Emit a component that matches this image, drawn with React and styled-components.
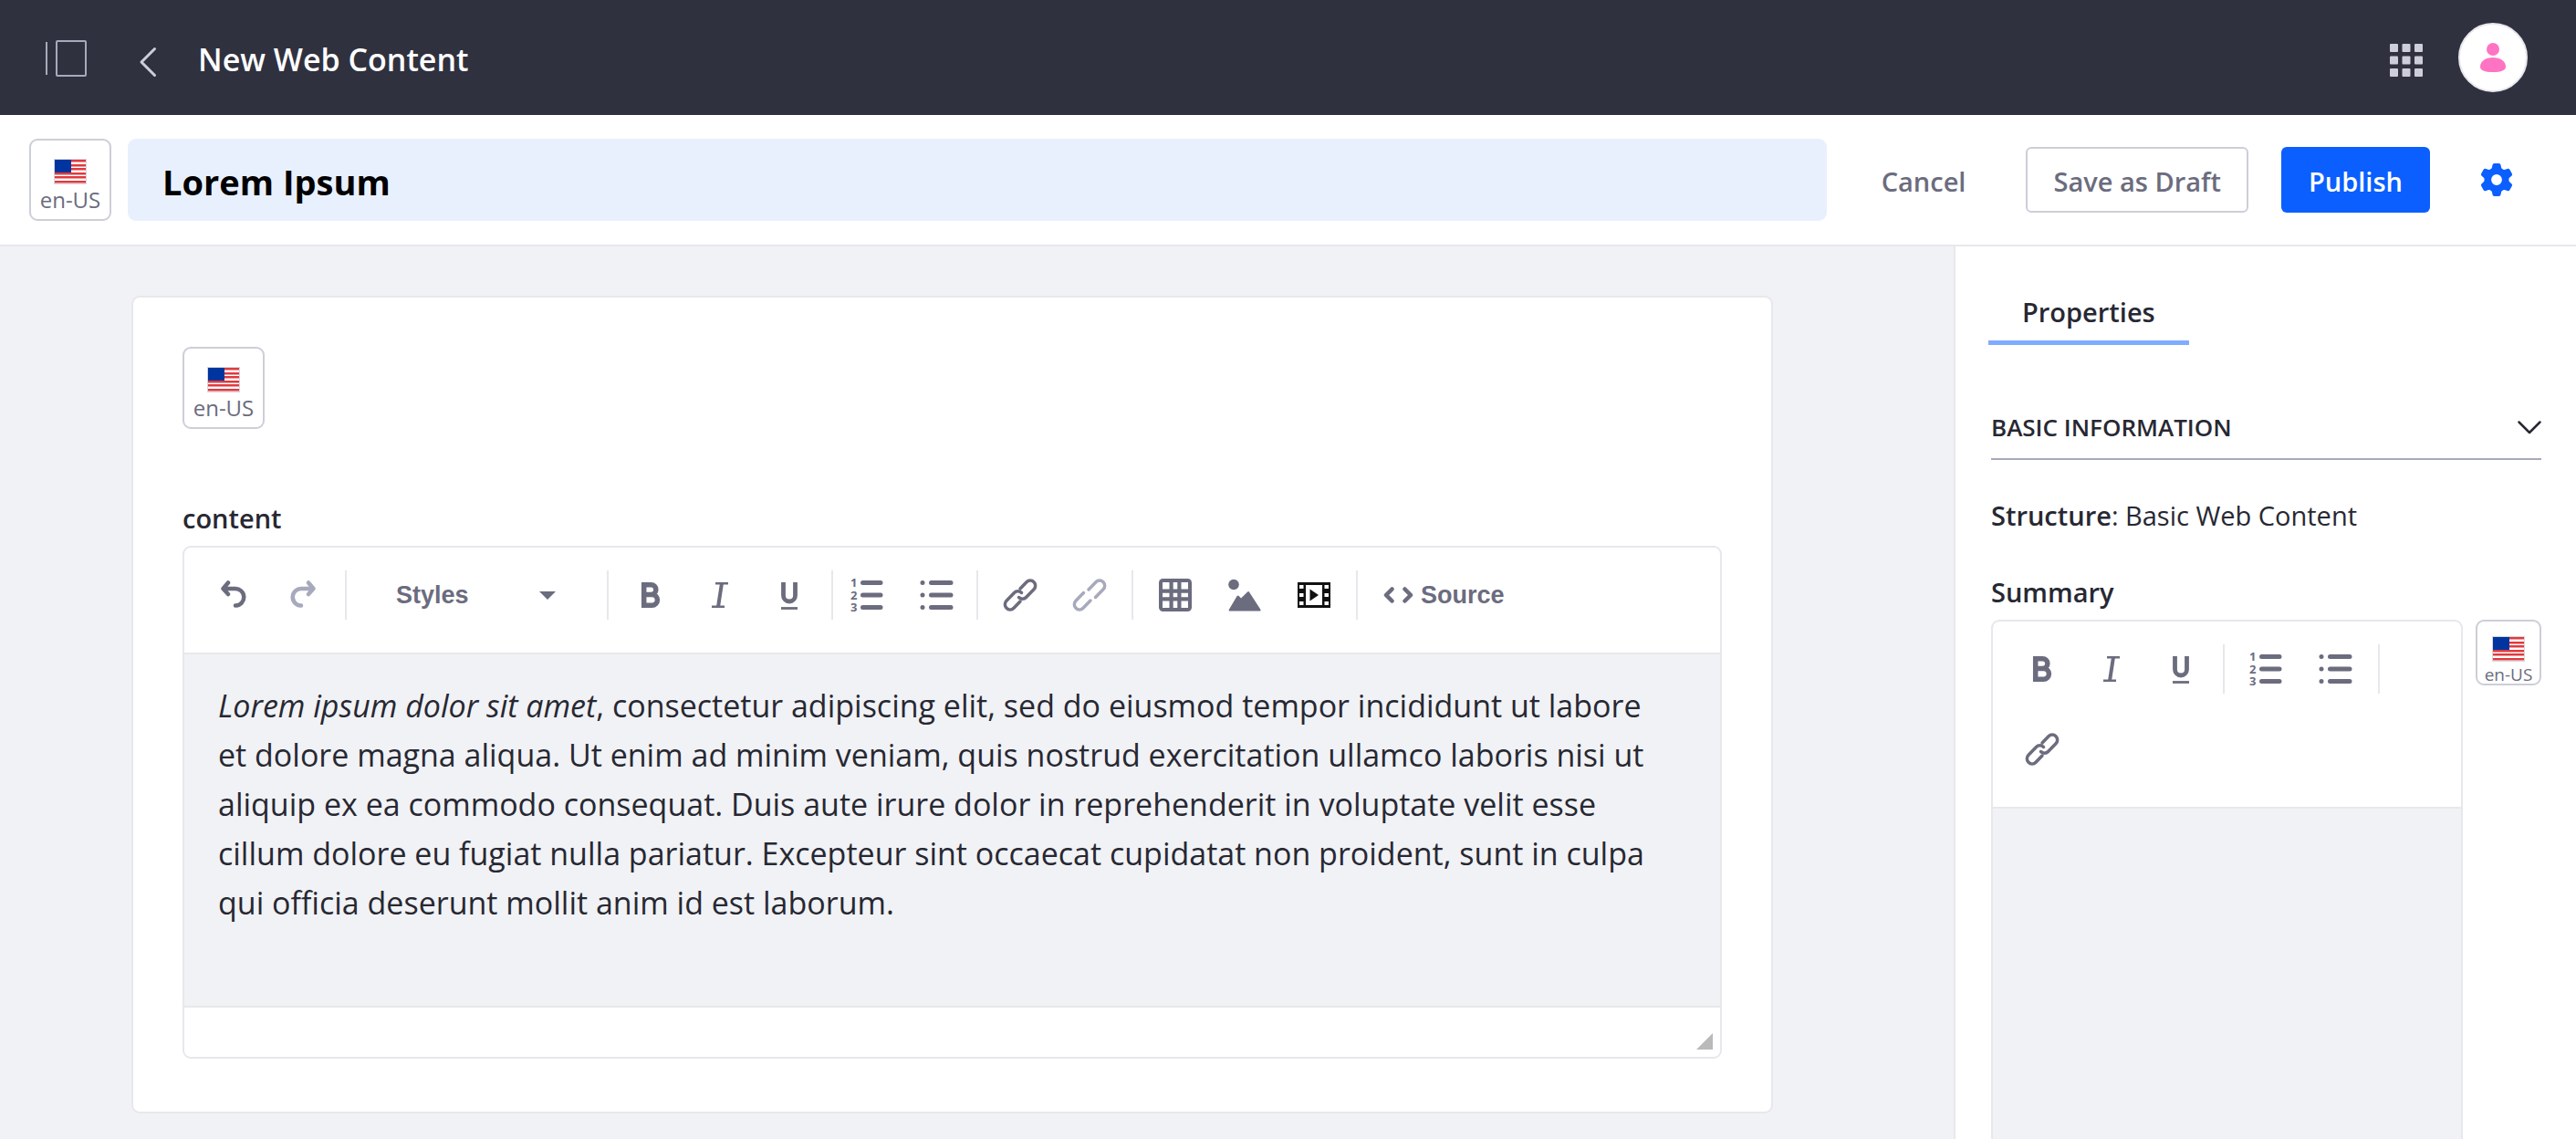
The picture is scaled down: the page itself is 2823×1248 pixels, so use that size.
import React from "react";
import styled, { createGlobalStyle, css } from "styled-components";

const ui = '"Open Sans", "Noto Sans", sans-serif';
const editorUi = '"Liberation Sans", Arial, sans-serif';

const color = {
  dark: "#30313f",
  text: "#272833",
  muted: "#6b6c7e",
  disabled: "#a7a9bc",
  outline: "#cdced9",
  line: "#e7e7ed",
  surface: "#f1f2f5",
  primary: "#0b5fff",
  field: "#e8f0fe",
};

const GlobalStyle = createGlobalStyle`
  * { box-sizing: border-box; }
  body { margin: 0; background: ${color.surface}; color: ${color.text}; font-family: ${ui}; }
  button, input, select { font: inherit; color: inherit; margin: 0; }
  button { padding: 0; border: 0; background: none; cursor: pointer; }
  svg { display: block; flex: none; overflow: visible; }
`;

const Shell = styled.div`
  display: flex;
  flex-direction: column;
  height: 100vh;
  overflow: hidden;
`;

const ControlMenu = styled.header`
  display: flex;
  flex: none;
  align-items: center;
  height: 126px;
  padding: 0 53px 0 50px;
  background: ${color.dark};
  color: #fff;
`;

const MenuButton = styled.button`
  display: flex;
  align-items: center;
  padding-top: ${(p) => (p.$soft ? 2 : 6)}px;
  color: ${(p) => (p.$soft ? color.disabled : color.outline)};
`;

const BackLink = styled.a`
  display: flex;
  margin: 10px 46px 0 58px;
  color: ${color.outline};
`;

const PageTitle = styled.h1`
  flex: 1;
  margin: 0;
  padding-top: 4px;
  font-size: 34px;
  line-height: 50px;
  font-weight: 600;
`;

const MenuActions = styled.div`
  display: flex;
  align-items: center;
  gap: 39px;
`;

const Avatar = styled.button`
  display: grid;
  place-items: center;
  width: 76px;
  height: 76px;
  border: 2px solid ${color.line};
  border-radius: 50%;
  background: #fff;
  color: #ff73c3;
`;

const TitleBar = styled.form`
  display: flex;
  flex: none;
  align-items: center;
  height: 144px;
  padding: 0 68px 0 32px;
  border-bottom: 2px solid ${color.line};
  background: #fff;
`;

const TitleInput = styled.input`
  flex: 1;
  min-width: 0;
  height: 90px;
  margin-left: 18px;
  padding: 4px 38px 0;
  border: 0;
  border-radius: 9px;
  background: ${color.field};
  color: #000;
  font-size: 38px;
  font-weight: 700;
`;

const LocaleButton = styled.button`
  display: flex;
  flex: none;
  flex-direction: column;
  align-items: center;
  width: ${(p) => (p.$small ? 72 : 90)}px;
  height: ${(p) => (p.$small ? 72 : 90)}px;
  padding-top: ${(p) => (p.$small ? 16 : 20)}px;
  border: 2px solid ${color.outline};
  border-radius: 9px;
  background: #fff;
  color: ${color.muted};
  font-size: ${(p) => (p.$small ? 19 : 24)}px;
  line-height: ${(p) => (p.$small ? 28 : 34)}px;
`;

const Actions = styled.div`
  display: flex;
  align-items: center;
  gap: 36px;
  margin-left: 30px;
`;

const Button = styled.button`
  height: 72px;
  padding: 2px 28px 0;
  border: 2px solid transparent;
  border-radius: 6px;
  color: ${color.muted};
  font-size: 29px;
  font-weight: 600;
  ${(p) => p.$kind === "secondary" && css`border-color: ${color.outline}; background: #fff;`}
  ${(p) => p.$kind === "primary" && css`background: ${color.primary}; color: #fff;`}
`;

const SettingsButton = styled.button`
  margin-left: 18px;
  color: ${color.primary};
`;

const Body = styled.div`
  display: flex;
  flex: 1;
  min-height: 0;
`;

const Main = styled.main`
  flex: 1;
  min-width: 0;
  padding: 54px 198px 30px 144px;
`;

const Card = styled.section`
  padding: 54px 54px 58px;
  border: 2px solid ${color.line};
  border-radius: 9px;
  background: #fff;
`;

const FieldLabel = styled.h2`
  margin: ${(p) => p.$top}px 0 8px;
  font-size: 29px;
  line-height: 44px;
  font-weight: 600;
`;

const Editor = styled.div`
  flex: 1;
  min-width: 0;
  border: 2px solid ${color.line};
  border-radius: 9px;
  background: #fff;
`;

const Toolbar = styled.div`
  display: flex;
  flex-wrap: wrap;
  row-gap: 34px;
  padding: 25px 16px 36px;
  border-bottom: 2px solid #e8e8e8;
`;

const Group = styled.div`
  display: flex;
  align-items: center;
  height: 54px;
  padding: 0 8px 0 ${(p) => (p.$first ? 0 : 8)}px;
  border-right: ${(p) => (p.$last ? 0 : 2)}px solid ${color.line};
  ${(p) => p.$tight && css`padding: 0 5px 0 0;`}
`;

const Tool = styled.button`
  display: grid;
  place-items: center;
  width: 76px;
  height: 54px;
  color: ${(p) => (p.disabled ? color.disabled : color.muted)};
`;

const StylesBox = styled.label`
  display: grid;
  align-items: center;
  width: 269px;
  color: ${color.muted};
  > * { grid-area: 1 / 1; }
  svg { justify-self: end; margin-right: 48px; pointer-events: none; }
`;

const StylesSelect = styled.select`
  width: 100%;
  height: 54px;
  padding: 0 0 0 46px;
  border: 0;
  appearance: none;
  background: transparent;
  font-family: ${editorUi};
  font-size: 27px;
  font-weight: 700;
`;

const SourceButton = styled.button`
  display: flex;
  align-items: center;
  gap: 8px;
  margin-left: 20px;
  color: ${color.muted};
  font-family: ${editorUi};
  font-size: 27px;
  font-weight: 700;
`;

const Content = styled.div`
  min-height: ${(p) => p.$height}px;
  padding: 29px 54px 29px 37px;
  border-bottom: 2px solid #e8e8e8;
  background: ${color.surface};
  font-size: 34px;
  line-height: 54px;
  p { margin: 0; }
`;

const EditorFooter = styled.div`
  display: flex;
  align-items: flex-end;
  justify-content: flex-end;
  height: 54px;
  padding: 8px;
  color: #bababa;
`;

const Sidebar = styled.aside`
  flex: none;
  width: 682px;
  padding: 36px 38px 0 36px;
  border-left: 2px solid ${color.line};
  background: #fff;
`;

const Tab = styled.button`
  display: block;
  height: 72px;
  padding: 4px 37px 0;
  border-bottom: 5px solid #80acff;
  color: ${color.text};
  font-size: 29px;
  font-weight: 600;
`;

const SidebarBody = styled.div`
  padding-left: 3px;
`;

const PanelHeader = styled.button`
  display: flex;
  align-items: center;
  justify-content: space-between;
  width: 100%;
  height: 72px;
  margin-top: 54px;
  padding-top: 2px;
  border-bottom: 2px solid ${color.disabled};
  color: ${color.text};
  font-size: 26px;
  font-weight: 600;
`;

const Structure = styled.p`
  margin: 39px 0 0;
  font-size: 29px;
  line-height: 44px;
  b { font-weight: 600; }
`;

const SummaryRow = styled.div`
  display: flex;
  align-items: flex-start;
  gap: 14px;
`;

const Flag = () => (
  <svg width="36" height="28" viewBox="0 0 36 28">
    <rect width="36" height="28" fill="#d5d7de" />
    <rect x="1" y="1" width="34" height="26" fill="#fff" />
    {[1, 6, 10, 15, 19, 24].map((y) => (
      <rect key={y} x="1" y={y} width="34" height="2.5" fill="#e03a3e" />
    ))}
    <rect x="1" y="1" width="18" height="14" fill="#0035a0" />
  </svg>
);

const Locale = ({ small }) => (
  <LocaleButton type="button" $small={small}>
    <Flag />
    en-US
  </LocaleButton>
);

const Stroke = ({ children, w = 3.5, size = 36 }) => (
  <svg width={size} height={size} viewBox="0 0 36 36" fill="none" stroke="currentColor" strokeWidth={w} strokeLinecap="round" strokeLinejoin="round">
    {children}
  </svg>
);

const UndoIcon = () => (
  <Stroke w={4.5}><path d="M12 4.500L6.500 11l5.500 6M7.500 11h12a9 9 0 0 1 1 18.500h-.5" /></Stroke>
);
const RedoIcon = () => (
  <Stroke w={4.5}><path d="M24 4.500l5.500 6.500-5.500 6M28.500 11h-12a9 9 0 0 0-1 18.500h.5" /></Stroke>
);
const BoldIcon = () => (
  <svg width="36" height="36" viewBox="0 0 36 36" fill="none" stroke="currentColor" strokeWidth="5.500">
    <path d="M10.700 6.700h7.800a5.100 5.100 0 0 1 0 10.700h-7.800zM10.700 17.400h8.800a5.700 5.700 0 0 1 0 11.800h-8.800z" />
  </svg>
);
const ItalicIcon = () => (
  <svg width="36" height="36" viewBox="0 0 36 36" fill="none" stroke="currentColor">
    <path d="M13 5.300h14M9 30.700h14" strokeWidth="2.600" />
    <path d="M20 5l-4 26" strokeWidth="4" />
  </svg>
);
const UnderlineIcon = () => (
  <svg width="36" height="36" viewBox="0 0 36 36" fill="none" stroke="currentColor">
    <path d="M11.500 4v14.500a6.500 6.500 0 0 0 13 0V4" strokeWidth="4.800" />
    <path d="M9 32.500h18" strokeWidth="2.800" />
  </svg>
);
const Numeral = styled.text`
  font-family: "Open Sans", sans-serif;
  font-size: 13px;
  font-weight: 700;
  fill: currentColor;
  stroke: none;
`;
const NumberedIcon = () => (
  <Stroke w={5}>
    <path d="M12.500 4.500h19.500M12.500 18h19.500M12.500 31.500h19.500" />
    <Numeral x="-1" y="9">1</Numeral>
    <Numeral x="-1" y="23">2</Numeral>
    <Numeral x="-1" y="36">3</Numeral>
  </Stroke>
);
const BulletIcon = () => (
  <Stroke w={5}>
    <path d="M11.500 4.500h21.500M11.500 18h21.500M11.500 31.500h21.500M2 4.500h.01M2 18h.01M2 31.500h.01" />
  </Stroke>
);
const LinkIcon = () => (
  <Stroke>
    <path d="M18 11l7-7.300a5.600 5.600 0 0 1 8 8L24.500 20.500a5.600 5.600 0 0 1-8 0" />
    <path d="M18 25l-7 7.300a5.600 5.600 0 0 1-8-8L11.500 15.500a5.600 5.600 0 0 1 8 0" />
  </Stroke>
);
const UnlinkIcon = () => (
  <Stroke>
    <path d="M17 12l8-8.300a5.600 5.600 0 0 1 8 8L24.500 20.500" />
    <path d="M19 24l-8 8.300a5.600 5.600 0 0 1-8-8L11.500 15.500" />
  </Stroke>
);
const TableIcon = () => (
  <svg width="36" height="36" viewBox="0 0 36 36" fill="currentColor">
    <rect width="36" height="36" rx="4.500" />
    <path fill="#fff" d="M4 4h7.500v7.500H4zM15.700 4h4.600v7.500h-4.600zM24.500 4H32v7.500h-7.500zM4 15.700h7.500v4.600H4zM15.700 15.700h4.600v4.600h-4.600zM24.500 15.700H32v4.600h-7.500zM4 24.500h7.500V32H4zM15.700 24.500h4.600V32h-4.600zM24.500 24.500H32V32h-7.500z" />
  </svg>
);
const ImageIcon = () => (
  <svg width="36" height="36" viewBox="0 0 36 36" fill="currentColor">
    <circle cx="6" cy="6.500" r="5.800" />
    <path d="M.8 34L9.500 19.200q1-1.500 2.200-.2l2.300 2.500 7.200-7q1.100-1 2 .5L35.500 34q.5 1.500-1 1.500H1.500q-1.500 0-.7-1.500z" />
  </svg>
);
const VideoIcon = () => (
  <svg width="36" height="36" viewBox="0 0 36 36">
    <rect y="4" width="36" height="28" fill="#111" />
    <rect x="9" y="7" width="18" height="22" fill="#fff" />
    <path fill="#fff" d="M2 7h4.500v4H2zM2 16h4.500v4H2zM2 25h4.500v4H2zM29.500 7H34v4h-4.500zM29.500 16H34v4h-4.500zM29.500 25H34v4h-4.500z" />
    <path d="M13.500 11.500v13l9.500-6.500z" fill="#111" />
  </svg>
);
const CodeIcon = () => (
  <svg width="33" height="18" viewBox="0 0 33 18" fill="none" stroke="currentColor" strokeWidth="4.500" strokeLinecap="round" strokeLinejoin="round">
    <path d="M9.500 2.500L3 9l6.500 6.500M23.500 2.500L30 9l-6.500 6.500" />
  </svg>
);
const Gear = () => (
  <svg width="38" height="38" viewBox="0 0 38 38" fill="currentColor">
    <circle cx="19" cy="19" r="9.700" fill="none" stroke="currentColor" strokeWidth="7.600" />
    {[0, 60, 120, 180, 240, 300].map((a) => (
      <path key={a} transform={`rotate(${a} 19 19)`} d="M12.500 9Q14 6.500 14.500 2.800Q14.800 1 16.500 1H21.500Q23.200 1 23.500 2.800Q24 6.500 25.500 9z" />
    ))}
  </svg>
);

const TextTools = ({ first }) => (
  <Group $first={first}>
    <Tool type="button" aria-label="Bold"><BoldIcon /></Tool>
    <Tool type="button" aria-label="Italic"><ItalicIcon /></Tool>
    <Tool type="button" aria-label="Underline"><UnderlineIcon /></Tool>
  </Group>
);
const ListTools = ({ tight }) => (
  <Group $tight={tight}>
    <Tool type="button" aria-label="Numbered list"><NumberedIcon /></Tool>
    <Tool type="button" aria-label="Bulleted list"><BulletIcon /></Tool>
  </Group>
);

export default function App() {
  return (
    <Shell>
      <GlobalStyle />
      <ControlMenu>
        <MenuButton type="button" $soft aria-label="Product menu">
          <svg width="45" height="40" viewBox="0 0 45 40" fill="none" stroke="currentColor" strokeWidth="2">
            <path d="M1 2v36" />
            <rect x="12" y="1" width="32" height="38" rx="1" />
          </svg>
        </MenuButton>
        <BackLink href="#" aria-label="Back">
          <svg width="18" height="32" viewBox="0 0 18 32" fill="none" stroke="currentColor" strokeWidth="3" strokeLinecap="round" strokeLinejoin="round">
            <path d="M16.500 1.500L2 16l14.500 14.500" />
          </svg>
        </BackLink>
        <PageTitle>New Web Content</PageTitle>
        <MenuActions>
          <MenuButton type="button" aria-label="Applications">
            <svg width="36" height="36" viewBox="0 0 36 36" fill="currentColor">
              {[0, 13.5, 27].map((y) => [0, 13.5, 27].map((x) => (
                <rect key={`${x}-${y}`} x={x} y={y} width="9" height="9" rx="1" />
              )))}
            </svg>
          </MenuButton>
          <Avatar type="button" aria-label="User">
            <svg width="28" height="32" viewBox="0 0 28 32" fill="currentColor">
              <circle cx="14" cy="7" r="7" />
              <path d="M14 16c8 0 14 4 14 10 0 4-5 6-14 6S0 30 0 26c0-6 6-10 14-10z" />
            </svg>
          </Avatar>
        </MenuActions>
      </ControlMenu>

      <TitleBar onSubmit={(e) => e.preventDefault()}>
        <Locale />
        <TitleInput type="text" aria-label="Title" defaultValue="Lorem Ipsum" />
        <Actions>
          <Button type="button">Cancel</Button>
          <Button type="button" $kind="secondary">Save as Draft</Button>
          <Button type="submit" $kind="primary">Publish</Button>
          <SettingsButton type="button" aria-label="Settings"><Gear /></SettingsButton>
        </Actions>
      </TitleBar>

      <Body>
        <Main>
          <Card>
            <Locale />
            <FieldLabel $top={76}>content</FieldLabel>
            <Editor>
              <Toolbar role="toolbar">
                <Group $first>
                  <Tool type="button" aria-label="Undo"><UndoIcon /></Tool>
                  <Tool type="button" aria-label="Redo" disabled><RedoIcon /></Tool>
                </Group>
                <Group>
                  <StylesBox>
                    <StylesSelect aria-label="Styles" defaultValue="Styles">
                      <option>Styles</option>
                    </StylesSelect>
                    <svg width="18" height="9" viewBox="0 0 18 9" fill="currentColor"><path d="M0 0h18L9 9z" /></svg>
                  </StylesBox>
                </Group>
                <TextTools />
                <ListTools tight />
                <Group>
                  <Tool type="button" aria-label="Link"><LinkIcon /></Tool>
                  <Tool type="button" aria-label="Unlink" disabled><UnlinkIcon /></Tool>
                </Group>
                <Group>
                  <Tool type="button" aria-label="Table"><TableIcon /></Tool>
                  <Tool type="button" aria-label="Image"><ImageIcon /></Tool>
                  <Tool type="button" aria-label="Video"><VideoIcon /></Tool>
                </Group>
                <Group $last>
                  <SourceButton type="button"><CodeIcon />Source</SourceButton>
                </Group>
              </Toolbar>
              <Content $height={387}>
                <p>
                  <em>Lorem ipsum dolor sit amet</em>, consectetur adipiscing elit, sed do eiusmod tempor incididunt ut labore et dolore magna aliqua. Ut enim ad minim veniam, quis nostrud exercitation ullamco laboris nisi ut aliquip ex ea commodo consequat. Duis aute irure dolor in reprehenderit in voluptate velit esse cillum dolore eu fugiat nulla pariatur. Excepteur sint occaecat cupidatat non proident, sunt in culpa qui officia deserunt mollit anim id est laborum.
                </p>
              </Content>
              <EditorFooter>
                <svg width="18" height="18" viewBox="0 0 18 18" fill="currentColor"><path d="M18 0v18H0z" /></svg>
              </EditorFooter>
            </Editor>
          </Card>
        </Main>

        <Sidebar>
          <Tab type="button" role="tab" aria-selected="true">Properties</Tab>
          <SidebarBody>
            <PanelHeader type="button" aria-expanded="true">
              BASIC INFORMATION
              <svg width="26" height="15" viewBox="0 0 26 15" fill="none" stroke="currentColor" strokeWidth="2.500" strokeLinecap="round" strokeLinejoin="round">
                <path d="M1.500 1.500L13 13 24.500 1.500" />
              </svg>
            </PanelHeader>
            <Structure><b>Structure</b>: Basic Web Content</Structure>
            <FieldLabel $top={40}>Summary</FieldLabel>
            <SummaryRow>
              <Editor>
                <Toolbar role="toolbar">
                  <TextTools first />
                  <ListTools />
                  <Group $first $last>
                    <Tool type="button" aria-label="Link"><LinkIcon /></Tool>
                  </Group>
                </Toolbar>
                <Content $height={450} />
              </Editor>
              <Locale small />
            </SummaryRow>
          </SidebarBody>
        </Sidebar>
      </Body>
    </Shell>
  );
}
